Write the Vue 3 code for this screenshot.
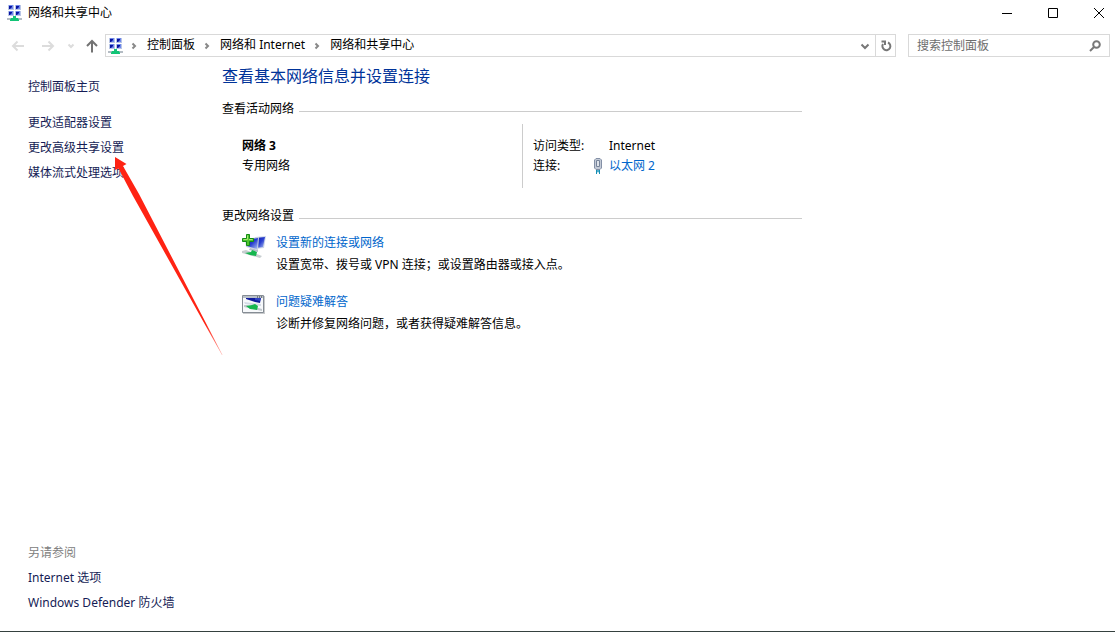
<script setup>
import { ref } from 'vue'

const query = ref('')
const crumbs = ['控制面板', '网络和 Internet', '网络和共享中心']
const tasks = ['更改适配器设置', '更改高级共享设置', '媒体流式处理选项']
const related = ['Internet 选项', 'Windows Defender 防火墙']
const monitors = [[1, 0], [8, 0], [1, 6], [8, 6]]
</script>

<template>
  <div class="window">
    <svg class="defs" width="0" height="0" aria-hidden="true">
      <defs>
        <linearGradient id="screen" x1="0" y1="0" x2="1" y2="1">
          <stop offset="0" stop-color="#0a18a8" />
          <stop offset="0.5" stop-color="#2a3fd0" />
          <stop offset="1" stop-color="#b4c8f4" />
        </linearGradient>
        <linearGradient id="tail" gradientUnits="userSpaceOnUse" x1="0" y1="0" x2="107" y2="197">
          <stop offset="0.85" stop-color="#ff2313" />
          <stop offset="1" stop-color="#ff2313" stop-opacity="0.4" />
        </linearGradient>
        <symbol id="network" viewBox="0 0 16 16">
          <g v-for="[x, y] in monitors" :key="`${x}-${y}`">
            <rect :x="x" :y="y" width="6" height="5" fill="#b9c6e6" />
            <rect :x="x + 1" :y="y" width="4" height="4" fill="#6f88ea" />
            <path :d="`M${x + 1} ${y + 1}h3v1l-2 2h-1z`" fill="#0712a0" />
          </g>
          <path d="M0 13h15v2H0z" fill="#b4bcc4" />
          <path d="M6 11h3v2h2l1 2v1H3v-1l1-2h2z" fill="#12c476" />
        </symbol>
      </defs>
    </svg>

    <header class="titlebar">
      <svg class="app-icon" width="16" height="16" aria-hidden="true"><use href="#network" /></svg>
      <span class="title">网络和共享中心</span>
      <div class="controls">
        <button type="button" aria-label="最小化"><svg width="12" height="12" viewBox="0 0 12 12"><path d="M1 6.500h10" /></svg></button>
        <button type="button" aria-label="最大化"><svg width="12" height="12" viewBox="0 0 12 12"><path d="M1.500 1.500h9v9h-9z" /></svg></button>
        <button type="button" aria-label="关闭"><svg width="12" height="12" viewBox="0 0 12 12"><path d="M1 1l10 10M11 1L1 11" /></svg></button>
      </div>
    </header>

    <nav class="toolbar" aria-label="导航">
      <div class="history">
        <button type="button" class="faint" aria-label="后退"><svg width="14" height="14" viewBox="0 0 14 14"><path d="M13 7H2M6.500 2.500L2 7l4.500 4.500" /></svg></button>
        <button type="button" class="faint" aria-label="前进"><svg width="14" height="14" viewBox="0 0 14 14"><path d="M1 7h11M7.500 2.500L12 7l-4.500 4.500" /></svg></button>
        <button type="button" class="faint small" aria-label="最近的位置"><svg width="8" height="8" viewBox="0 0 8 8"><path d="M1.500 2.500L4 5l2.500-2.500" /></svg></button>
        <button type="button" class="up" aria-label="上移"><svg width="14" height="14" viewBox="0 0 14 14"><path d="M7 13.500V2M2 7l5-5 5 5" /></svg></button>
      </div>
      <div class="address">
        <svg width="16" height="16" aria-hidden="true"><use href="#network" /></svg>
        <div class="crumbs">
          <template v-for="crumb in crumbs" :key="crumb">
            <svg class="chevron" width="8" height="8" viewBox="0 0 8 8" aria-hidden="true"><path d="M2.500 1.500L5 4 2.500 6.500" /></svg>
            <a href="#">{{ crumb }}</a>
          </template>
        </div>
        <button type="button" class="drop" aria-label="以前的位置"><svg width="10" height="10" viewBox="0 0 10 10"><path d="M1.500 3.500L5 7l3.500-3.500" /></svg></button>
        <button type="button" class="refresh" aria-label="刷新">
          <svg width="12" height="12" viewBox="0 0 12 12"><path d="M8 2.500A4 4 0 1 1 3 4M1.500 1.500h3.500v3.500" /></svg>
        </button>
      </div>
      <label class="search">
        <input v-model="query" type="text" placeholder="搜索控制面板" aria-label="搜索控制面板" />
        <svg width="12" height="12" viewBox="0 0 12 12" aria-hidden="true"><circle cx="7.500" cy="4.500" r="3.300" /><path d="M5 7L1 11" /></svg>
      </label>
    </nav>

    <div class="body">
      <aside class="sidebar">
        <a href="#" class="home">控制面板主页</a>
        <a v-for="task in tasks" :key="task" href="#">{{ task }}</a>
        <div class="related">
          <span class="muted">另请参阅</span>
          <a v-for="item in related" :key="item" href="#">{{ item }}</a>
        </div>
      </aside>

      <main class="content">
        <h1>查看基本网络信息并设置连接</h1>
        <section>
          <h2>查看活动网络</h2>
          <div class="active">
            <div class="network">
              <strong>网络 3</strong>
              <span>专用网络</span>
            </div>
            <dl class="details">
              <dt>访问类型:</dt>
              <dd>Internet</dd>
              <dt>连接:</dt>
              <dd>
                <svg class="plug" width="10" height="16" viewBox="0 0 10 16" aria-hidden="true">
                  <path d="M3 .500h4l1.500 1.500v8L7 11.500H3L1.500 10V2z" fill="#c3cad6" stroke="#8490a6" />
                  <path d="M3.500 2.500h3v6h-3z" fill="#f4f6f9" stroke="#77849a" />
                  <path d="M5 3v5" stroke="#c9cfda" />
                  <path d="M3 12h4v2H3z" fill="#1c87ad" />
                  <path d="M3.500 12v4M6.500 12v4" stroke="#168fb5" />
                  <path d="M5 12v3" stroke="#8cd3e7" />
                </svg>
                <a href="#">以太网 2</a>
              </dd>
            </dl>
          </div>
        </section>

        <section>
          <h2>更改网络设置</h2>
          <div class="option">
            <svg width="24" height="24" viewBox="0 0 24 24" aria-hidden="true">
              <path d="M13 3l11-1-2 12-9 1z" fill="#cbd5e8" />
              <path d="M14 4l9-1-2 10-7 1z" fill="url(#screen)" />
              <path d="M3 5l14-2-1 13-12-3z" fill="#c9d1e1" />
              <path d="M4 6l12-2-1 11-10-3z" fill="url(#screen)" />
              <path d="M8 14l8 2v2l-9-2z" fill="#b4bdcc" />
              <path d="M0 17l4-1 16 6-2 2-18-5z" fill="#c8ced1" />
              <path d="M3 19l6-1 1-2 5 2-1 4-6-1z" fill="#16b64f" />
              <path d="M4.500.500h3v4h4v3h-4v4h-3v-4h-4v-3h4z" fill="#4fc42e" stroke="#138c17" />
              <path d="M5.500 1.500v4h-4M7 5.500h3.500" fill="none" stroke="#a4e66d" />
            </svg>
            <div>
              <a href="#">设置新的连接或网络</a>
              <p>设置宽带、拨号或 VPN 连接；或设置路由器或接入点。</p>
            </div>
          </div>
          <div class="option">
            <svg width="24" height="24" viewBox="0 0 24 24" aria-hidden="true">
              <path d="M1 3h22v18H1z" fill="#c8cacc" />
              <path d="M.500 2.500h21v17H.500z" fill="#f7f9fb" stroke="#858c94" />
              <path d="M1 3h20v2H1z" fill="#b9c0c8" />
              <path d="M15 4h1M17 4h1M19 4h1" stroke="#30353d" />
              <path d="M4 5h15l-1 5-5-1-9-3z" fill="#101b9c" />
              <path d="M13 5h6l-1 3-5-1z" fill="#3043c2" />
              <path d="M2 9l17 2v2L3 11z" fill="#d4dbe6" />
              <path d="M2 12h3l15 4v2L2 14z" fill="#c1c8cd" />
              <path d="M4 13l6-1 3-1 3 2-1 4-7-1z" fill="#16b64f" />
            </svg>
            <div>
              <a href="#">问题疑难解答</a>
              <p>诊断并修复网络问题，或者获得疑难解答信息。</p>
            </div>
          </div>
        </section>
      </main>
    </div>

    <svg class="pointer" width="108" height="198" viewBox="0 0 108 198" aria-hidden="true">
      <path d="M0 0L11.500 7 8 9 24 37 107.500 198 107 198 18 39 3.500 11.500 0 13z" fill="url(#tail)" />
    </svg>
  </div>
</template>

<style>
html, body { background: #fff; }
</style>

<style scoped>
* { box-sizing: border-box; }
.window {
  position: relative;
  display: flex;
  flex-direction: column;
  min-height: 100vh;
  border-bottom: 1px solid #35413f;
  background: #fff;
  color: #000;
  font: 12px/20px "Noto Sans", "Noto Sans CJK SC", sans-serif;
}
.defs { position: absolute; }
svg { display: block; flex: none; }
a { color: #0066cc; text-decoration: none; }
a:hover { text-decoration: underline; }
button {
  display: flex;
  align-items: center;
  justify-content: center;
  padding: 0;
  border: 0;
  background: none;
}
button svg { fill: none; stroke: currentColor; }

.titlebar {
  display: flex;
  align-items: center;
  height: 26px;
  padding-left: 7px;
}
.title { margin-left: 5px; line-height: 22px; }
.controls { display: flex; margin-right: -7px; margin-left: auto; }
.controls button { width: 46px; height: 26px; color: #000; }

.toolbar {
  display: flex;
  align-items: center;
  padding: 8px 5px 0 0;
}
.history {
  display: flex;
  align-items: center;
  width: 105px;
  padding-left: 11px;
}
.history button { width: 30px; height: 22px; justify-content: flex-start; color: #737373; }
.history svg { stroke-width: 2; }
.history .faint { color: #dcdcdc; }
.history .small { width: 14px; margin-left: -4px; }
.history .up { width: 14px; margin-left: 4px; }
.address {
  display: flex;
  flex: 1;
  align-items: center;
  height: 23px;
  padding-left: 2px;
  border: 1px solid #d9d9d9;
}
.crumbs { display: flex; flex: 1; align-items: center; padding-bottom: 1px; }
.crumbs a { color: #000; }
.chevron { margin: 1px 9px 0 8px; fill: none; stroke: #888; stroke-width: 2; }
.chevron:first-child { margin-left: 6px; }
.drop { width: 20px; height: 21px; color: #777; }
.drop svg { stroke-width: 2; }
.refresh { width: 20px; height: 21px; border-left: 1px solid #d9d9d9; color: #777; }
.refresh svg { stroke-width: 2; }
.search {
  display: flex;
  align-items: center;
  width: 202px;
  height: 23px;
  margin-left: 12px;
  padding: 0 8px;
  border: 1px solid #d9d9d9;
}
.search input {
  flex: 1;
  min-width: 0;
  padding: 0;
  border: 0;
  outline: 0;
  background: none;
  font: inherit;
}
.search input::placeholder { color: #6d6d6d; opacity: 1; }
.search svg { fill: none; stroke: #777; stroke-width: 2; }

.body { display: flex; flex: 1; }
.sidebar {
  display: flex;
  flex-direction: column;
  width: 222px;
  padding: 17px 0 16px 28px;
  line-height: 25px;
}
.sidebar a { color: #151c55; }
.sidebar .home { margin-bottom: 11px; }
.related { display: flex; flex-direction: column; margin-top: auto; }
.muted { color: #808080; }

.content { flex: 1; max-width: 580px; padding-top: 7px; }
h1 { margin: 0; color: #003399; font-size: 16px; font-weight: 400; line-height: 24px; }
h2 {
  display: flex;
  align-items: center;
  gap: 5px;
  margin: 0;
  font-size: 12px;
  font-weight: 400;
  line-height: 20px;
}
h2::after { content: ""; flex: 1; height: 1px; margin-top: 4px; background: #ccc; }
section { padding-top: 11px; }
section + section { padding-top: 18px; }
.active { display: flex; height: 64px; margin-top: 5px; padding-left: 20px; }
.network { display: flex; flex-direction: column; width: 280px; padding-top: 12px; }
.details {
  display: grid;
  flex: 1;
  grid-template-columns: 60px 1fr;
  align-content: start;
  margin: 0;
  padding: 12px 0 0 10px;
  border-left: 1px solid #ccc;
}
dd { display: flex; align-items: center; margin: 0; }
dd:first-of-type { padding-left: 16px; }
.plug { margin-right: 6px; }
.option { display: flex; gap: 10px; padding: 7px 0 0 20px; }
.option + .option { padding-top: 17px; }
.option > svg { margin-top: 1px; }
.option p { margin: 2px 0 0; }

.pointer { position: absolute; top: 157px; left: 115px; pointer-events: none; }
</style>
